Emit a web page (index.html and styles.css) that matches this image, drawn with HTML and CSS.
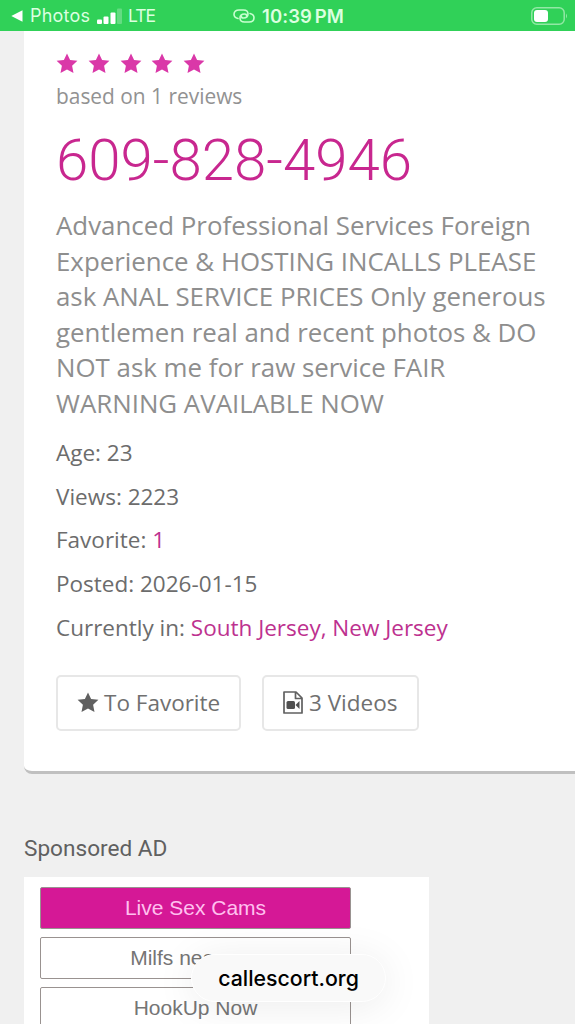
FILE: index.html
```html
<!DOCTYPE html>
<html lang="en">
<head>
<meta charset="utf-8">
<title>Listing</title>
<link rel="stylesheet" href="styles.css">
</head>
<body>
<svg class="defs" aria-hidden="true"><symbol id="star" viewBox="0 0 22 21"><path d="M11 .4 14.1 7l7.3.8-5.3 5 1.4 7.3L11 16.5l-6.5 3.6 1.4-7.3-5.3-5L7.9 7z"/></symbol></svg>
<header class="status">
  <div class="status-left">
    <svg class="back" viewBox="0 0 12 12"><path d="M11.500 .3v11.400L.3 6z" fill="#fff"/></svg>
    <span class="photos">Photos</span>
    <svg class="signal" viewBox="0 0 26 16" fill="#fff"><rect y="11.500" width="5" height="4.500" rx="1"/><rect x="6.500" y="8.500" width="5" height="7.500" rx="1"/><rect x="13.500" y="4.500" width="5" height="11.500" rx="1"/><rect x="20" y=".5" width="5" height="15.500" rx="1" opacity=".25"/></svg>
    <span class="lte">LTE</span>
  </div>
  <div class="status-center">
    <svg class="link" viewBox="0 0 22 14" fill="none" stroke="#c8ffd0" stroke-width="1.6" stroke-linecap="round"><path d="M5 9.500C2.500 9 1 7.500 1 5.300 1 2.700 3 1 6 1h4.500C13.500 1 15 2.700 15 5s-1.800 4-4.500 4C8.500 9 8 8 8.500 7"/><path d="M17 4.500c2.500.5 4 2 4 4.200 0 2.600-2 4.300-5 4.300h-4.500C8.500 13 7 11.300 7 9s1.800-4 4.500-4c2 0 2.500 1 2 2"/></svg>
    <span class="time">10:39 PM</span>
  </div>
  <svg class="battery" viewBox="0 0 37 18"><rect x=".8" y=".8" width="32.400" height="16.400" rx="5" fill="none" stroke="#92e8a5" stroke-width="1.500"/><rect x="3" y="3" width="14" height="12" rx="3" fill="#fff"/><path d="M35 6.500q2 2.500 0 5z" fill="#92e8a5"/></svg>
</header>
<main class="page">
  <section class="card">
    <div class="stars"><svg><use href="#star"/></svg><svg><use href="#star"/></svg><svg><use href="#star"/></svg><svg><use href="#star"/></svg><svg><use href="#star"/></svg></div>
    <p class="reviews">based on 1 reviews</p>
    <h1 class="phone">609-828-4946</h1>
    <p class="description">Advanced Professional Services Foreign<br>Experience &amp; HOSTING INCALLS PLEASE<br>ask ANAL SERVICE PRICES Only generous<br>gentlemen real and recent photos &amp; DO<br>NOT ask me for raw service FAIR<br>WARNING AVAILABLE NOW</p>
    <ul class="facts">
      <li>Age: 23</li>
      <li>Views: 2223</li>
      <li>Favorite: <a>1</a></li>
      <li>Posted: 2026-01-15</li>
      <li>Currently in: <a>South Jersey, New Jersey</a></li>
    </ul>
    <div class="actions">
      <button class="action favorite"><svg class="icon-star"><use href="#star"/></svg><span>To Favorite</span></button>
      <button class="action videos"><svg class="icon-file" viewBox="0 0 20 23"><path d="M1 1h12l6 6v15H1zM12.500 1v6.500H19" fill="none" stroke="#606060" stroke-width="1.700" stroke-linejoin="round"/><rect x="3.500" y="10" width="8.500" height="8" rx="1.500" fill="#505050"/><path d="M12.500 14 16.500 10v8z" fill="#505050"/></svg><span>3 Videos</span></button>
    </div>
  </section>
  <h2 class="sponsored">Sponsored AD</h2>
  <section class="ads">
    <a class="ad ad-primary">Live Sex Cams</a>
    <a class="ad">Milfs near you</a>
    <a class="ad">HookUp Now</a>
  </section>
</main>
<div class="address">callescort.org</div>
</body>
</html>
```
FILE: styles.css
```css
* { box-sizing: border-box; }
body { margin: 0; width: 575px; height: 1024px; overflow: hidden; position: relative; background: #f0f0f0; font-family: "Open Sans", "Noto Sans", sans-serif; color: #6c6c6c; }
h1, h2, p, ul { margin: 0; padding: 0; font-weight: 400; }
.defs { position: absolute; width: 0; height: 0; }
.status { height: 31px; background: #30d158; display: flex; align-items: center; justify-content: space-between; padding: 0 7px 0 11px; color: #dcffe0; font-family: Inter, sans-serif; font-size: 18px; }
.status-left, .status-center { display: flex; align-items: center; }
.status-left { width: 222px; }
.back { width: 12px; height: 12px; margin-right: 7px; }
.photos { width: 67px; letter-spacing: .2px; }
.signal { width: 26px; height: 16px; margin-right: 5px; }
.lte { font-size: 17.500px; letter-spacing: -1px; }
.status-center { flex: 1; }
.link { width: 22px; height: 14px; margin-right: 7px; }
.time { font-weight: 600; font-size: 18.500px; letter-spacing: .1px; word-spacing: -2px; }
.battery { width: 37px; height: 18px; }
.card { margin-left: 24px; height: 743px; padding: 22px 0 0 32px; background: #fff; border-bottom: 3px solid #c0c0c0; border-bottom-left-radius: 8px; }
.stars { display: flex; gap: 9.800px; height: 22px; }
.stars svg { width: 22px; height: 21px; fill: #da38a8; }
.reviews { margin-top: 7px; font-size: 20.900px; line-height: 28px; color: #929292; white-space: nowrap; }
.phone { margin-top: 15px; height: 70px; font-family: Roboto, sans-serif; font-weight: 300; font-size: 58.200px; line-height: 70px; color: #c8278f; }
.description { margin-top: 13px; font-size: 25.860px; line-height: 35.500px; color: #8e8e8e; white-space: nowrap; }
.facts { list-style: none; margin-top: 10px; font-size: 22.500px; line-height: 43.700px; white-space: nowrap; }
.facts a { color: #bd318f; }
.actions { display: flex; gap: 21px; margin-top: 25px; }
.action { height: 56px; border: 2px solid #e7e7e7; border-radius: 5px; background: #fff; display: flex; align-items: center; padding: 0 0 0 19px; font: 22.500px "Open Sans", sans-serif; color: #707070; white-space: nowrap; }
.favorite { width: 185px; }
.videos { width: 157px; }
.icon-star { width: 22px; height: 21px; fill: #606060; margin-right: 5px; }
.icon-file { width: 20px; height: 23px; margin-right: 6px; }
.sponsored { margin: 57px 0 0 24px; font-family: Roboto, sans-serif; font-size: 22.600px; line-height: 36px; color: #606060; }
.ads { margin: 10px 0 0 24px; width: 405px; height: 180px; padding: 10px 16px; background: #fff; display: flex; flex-direction: column; gap: 8px; }
.ad { flex: none; width: 311px; height: 42px; border: 1.500px solid #999290; border-radius: 2px; font-family: "Liberation Sans", Arial, sans-serif; font-size: 21px; line-height: 39px; text-align: center; color: #757575; }
.ad-primary { background: #d51896; color: #ffc0ef; }
.address { position: absolute; left: 191px; top: 954px; width: 195px; height: 48px; border-radius: 24px; border: 1px solid #fff; background: #f9f9f9; box-shadow: 0 4px 40px rgba(0,0,0,.08); font: 500 21.300px/47px Inter, sans-serif; text-align: center; color: #000; }
```
